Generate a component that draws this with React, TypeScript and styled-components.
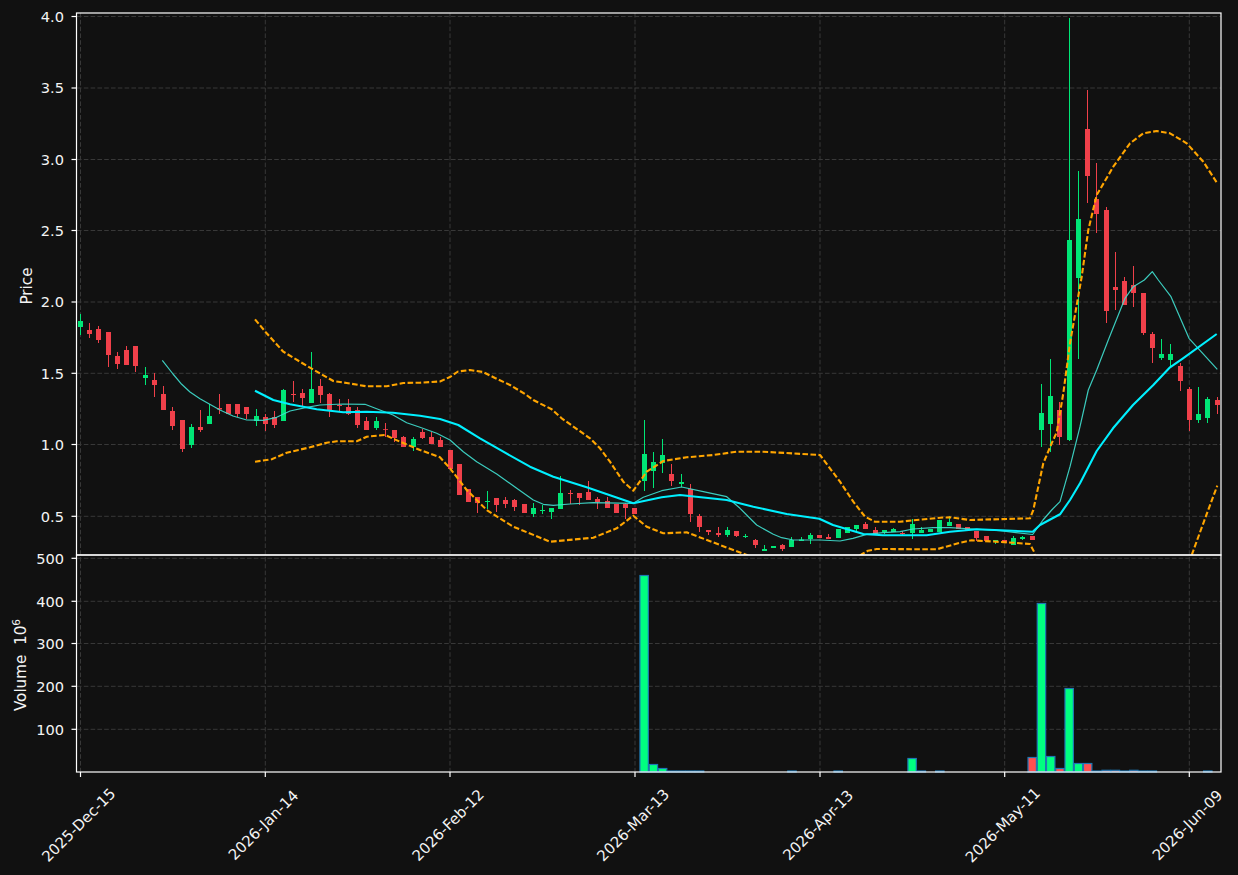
import React from "react";
import styled, { createGlobalStyle } from "styled-components";

const GlobalStyle = createGlobalStyle`
  html, body { margin: 0; padding: 0; background: #111111; overflow: hidden; }
`;

const Page = styled.main`
  width: 1238px;
  height: 875px;
  background: #111111;
`;

const ChartSvg = styled.svg`
  display: block;
  width: 1238px;
  height: 875px;
  font-family: "DejaVu Sans", sans-serif;
`;

const GridLine = styled.line`
  stroke: #383838;
  stroke-width: 1;
  stroke-dasharray: 4.6 2.2;
`;
const Spine = styled.rect`
  fill: none;
  stroke: #ffffff;
  stroke-width: 1.2;
`;
const Tick = styled.line`
  stroke: #ffffff;
  stroke-width: 1.2;
`;
const TickLabel = styled.text`
  fill: #f4f4f4;
  font-size: 14.6px;
`;
const DateLabel = styled.text`
  fill: #f4f4f4;
  font-size: 14.9px;
  text-anchor: middle;
`;
const AxisTitle = styled.text`
  fill: #f4f4f4;
  font-size: 15.2px;
  text-anchor: middle;
`;
const Sup = styled.tspan`
  font-size: 10.6px;
`;
const Wick = styled.line<{ $up: boolean }>`
  stroke: ${(p) => (p.$up ? "#00e676" : "#f0404a")};
  stroke-width: 1;
`;
const Body = styled.rect<{ $up: boolean }>`
  fill: ${(p) => (p.$up ? "#00e676" : "#f0404a")};
`;
const VolumeBar = styled.rect<{ $up: boolean }>`
  fill: ${(p) => (p.$up ? "#00ff80" : "#ff5050")};
  stroke: #1f77b4;
  stroke-width: 1.2;
`;
const ThinLine = styled.polyline`
  fill: none;
  stroke: #40e0d0;
  stroke-opacity: 0.9;
  stroke-width: 1.2;
  stroke-linejoin: round;
`;
const MeanLine = styled.polyline`
  fill: none;
  stroke: #00f0ff;
  stroke-width: 2.1;
  stroke-linejoin: round;
`;
const BandLine = styled.polyline`
  fill: none;
  stroke: #ffa500;
  stroke-width: 2.1;
  stroke-dasharray: 5.6 2.4;
  stroke-linejoin: round;
`;

const X0 = 80.5;
const DX = 9.24;
const xAt = (i: number) => X0 + DX * i;
const G = 1;
const R = 0;

// up?, wick top, body top, body bottom, wick bottom (pixel rows)
const candles: number[][] = [
  [G,314,321,327,335],[R,323,330,334,338],[R,326,329,340,343],[R,332,332,355,367],[R,352,356,364,369],
  [R,346,350,365,365],[R,346,346,366,372],[G,367,375,378,385],[R,373,380,385,397],[R,386,394,410,410],
  [R,407,411,426,430],[R,420,420,449,452],[G,424,427,445,448],[R,410,427,430,432],[G,404,416,424,424],
  [R,394,408,409.5,414],[R,404,404,414,414],[R,404,404,414,417],[R,407,407,414,419],[G,409,416,421,426],
  [R,414,417,424,431],[R,411,417,425,428],[G,389,390,421,421],[R,381,394,395,402],[R,389,393,398,406],
  [G,352,389,403,403],[R,379,386,395,403],[R,393,394,411,417],[R,399,405,406,412],[R,399,407,414,415],
  [R,407,410,425,428],[R,417,421,430,430],[G,417,421,428,430],[R,423,429,429.8,437],[R,430,430,438,442],
  [R,436,437,447,447],[G,437,439,447,451],[R,429,432,438,439],[R,432,437,444,444],[R,437,440,447,447],
  [R,450,450,469,469],[R,464,464,495,495],[R,489,489,502,502],[R,497,497,503,513],[G,491,501,502,509],
  [R,498,498,505,512],[R,497,500,504,508],[R,499,500,507,511],[R,504,504,513,513],[G,503,508,514,517],
  [G,505,510,511,514],[G,508,508,512,519],[G,476,493,509,509],[R,490,493,494,504],[R,493,493,498,505],
  [R,481,492,500,500],[R,497,499,502,509],[R,497,501,508,508],[R,504,504,513,513],[R,503,504,508,519],
  [R,508,508,514,514],[G,420,454,481,491],[G,452,462,471,488],[G,439,455,463,473],[R,464,474,481,486],
  [G,474,482,484,487],[R,484,489,514,522],[R,514,516,527,532],[R,530,530,532,535],[R,527,533,535,537],
  [G,527,530,535,537],[R,531,531,536,537],[G,534,536,537,538],[R,539,540,545,548],[G,545,549,551,551],
  [G,546,546,548,548],[R,544,545,549,551],[G,537,540,547,547],[G,537,539.5,541,541],[G,533,535,539,544],
  [R,535,535,538,538],[R,534,537,539,539],[G,529,529,538,538],[G,527,527,533,533],[G,525,525,529,531],
  [R,522,524,529,529],[R,527,530,534,534],[G,530,530,532,534],[G,528,529,532,532],[R,531,533,534,535],
  [G,519,524,533,539],[G,527,530,533,533],[G,529,529,532,532],[G,520,520,532,532],[G,516,522,526,526],
  [R,524,524,529,529],[R,527,527,530,530],[R,531,531,538,541],[R,536,536,541,541],[G,540,540,541.3,544],
  [R,540,540,543,543],[G,536,538,545,545],[G,536,537,539,540],[R,536,536,540,540],[G,384,413,430,447],
  [G,359,396,424,452],[R,402,410,437,445],[G,18,240,440,441],[G,171,219,278,359],[R,90,129,176,203],
  [R,163,199,214,233],[R,207,210,311,323],[R,252,287,290,310],[R,277,281,305,305],[R,266,285,293,307],
  [R,293,293,333,335],[R,332,334,348,363],[G,339,354,358,360],[G,344,354,360,367],[R,363,366,381,391],
  [R,387,389,420,431],[G,387,414,420,423],[G,397,399,418,423],[R,397,400,405,414],
];

// index, bar top row, up?
const volumes: number[][] = [
  [61,575.5,G],[62,764.5,G],[63,768.5,G],[64,771,G],[65,771,G],[66,771,G],[67,771,G],[77,771,G],[82,771,G],
  [90,758.5,G],[91,771,G],[93,771,G],[103,757.5,R],[104,603.5,G],[105,756.5,G],[106,768.5,R],
  [107,688.5,G],[108,763.5,G],[109,763.5,R],[110,771,G],[111,770.3,R],[112,770.3,R],[113,771,G],
  [114,770.3,R],[115,771,G],[116,771,G],[122,771,G],
];

const thin = "162.3,360.3 173,374 181.7,384.3 190,392 200,398.7 220,410 233,416 246.7,420 263,420.3 276.7,417.3 290,411 306.7,407.3 320,405 343,404 365,404.3 376.7,408.7 393,415 406.7,422.7 420,427.3 436.7,433.3 450,440 463.3,451.7 476.7,461.7 496.7,474 516.7,488.3 533.3,500 543.3,504.3 553.3,505.3 570,504 593.3,502.7 633.3,503.3 643.3,497.3 661.7,490.7 681.7,487 703.3,491.7 726.7,496.7 740,508.3 756.7,525 773.3,534.3 781.7,537.7 793.3,540 820,540 840,541 853,538.3 866.7,534.3 883,532.7 900,531.7 913,529 933,527.7 950,527.7 973,529 1000,530.7 1032.7,534.5 1043,520 1051.7,510 1060,501.7 1070,466.7 1080,426.7 1088.3,390 1096.7,370 1108.3,340 1125,298.3 1133.3,286.7 1144.3,280 1152.3,271.7 1158.3,280 1171,296.7 1189,338.3 1217.3,369.3";
const mean = "255,390.7 273.3,400 290,404.3 316.7,409.3 343.3,412.3 366.7,411.7 393,412.7 420,415.7 440,419 458.3,425 480,438.3 503.3,451.7 530,466.7 553.3,476.7 586.7,487.3 633.3,503.3 661.7,497.3 680,495 726.7,500 753.3,506.7 786.7,514 819.3,518.7 833,525 863.3,534 883,535.3 926.7,535.3 950,531.7 976.7,529.3 1032.7,531.7 1040,525 1060,514.3 1070,500 1080,483.3 1096.7,451 1113,428.3 1133,405 1153.3,385 1170,367.3 1183,358.3 1216.7,334";
const upper = "255,319.3 266.7,333.3 283.3,351.7 310,367.7 333.3,381 346.7,383 366.7,386.3 386.7,386.3 403.3,383 420,382.7 440,381.5 450,377 458,371.5 470,370 483,372 495,378 510,385 525,394 533.3,400 551.7,409.3 561.7,418.3 590,438.3 600,448.3 610,461.7 623.3,481.7 633.3,490.7 646.7,471.7 663.3,461 686.7,457.3 713.3,455 736.7,451.7 763.3,451.7 820,455 840,481.7 853.3,501.7 865,516.7 875,521.7 900,521.7 940,517.7 950,517.3 970,520 1030,518.3 1033.3,510 1043.3,463.3 1051.7,443.3 1056.7,432.3 1063.3,393.3 1070,343.3 1081.7,276.7 1088.3,230 1096.7,195 1113.3,166.7 1130,143.3 1143.3,133.3 1156.7,131 1170,133.3 1186.7,143.3 1203.3,161.7 1217.3,183.3";
const lower = "255,461.7 271.7,459.3 286.7,452.7 310,447.3 326.7,442.7 336.7,441.3 356.7,441.3 366.7,436.7 385,435 400,441.7 420,450 440,457.3 450,468.3 466.7,490 486.7,510 513.3,526.7 550,541.7 593.3,537.7 616.7,528.3 633.3,515.7 646.7,526.7 663.3,533.3 686.7,532.3 720,545 746.7,555 760,562 850,562 862.3,554 868,550.7 876.7,549 936.7,549.3 960,542.7 971.7,540.3 1013,542.7 1030,544 1034,551.7 1036,562 1185,572 1191.7,555 1203.3,523.3 1217.3,485.7";

const priceTicks: [string, number][] = [["4.0",16.5],["3.5",88],["3.0",159.5],["2.5",230.5],["2.0",302],["1.5",373.3],["1.0",444.5],["0.5",516.3]];
const volumeTicks: [string, number][] = [["500",558.3],["400",601.3],["300",643.5],["200",686.3],["100",729.3]];
const dateTicks: [string, number][] = [["2025-Dec-15",80.5],["2026-Jan-14",265.3],["2026-Feb-12",450],["2026-Mar-13",635],["2026-Apr-13",820],["2026-May-11",1004.7],["2026-Jun-09",1189.3]];

export default function App() {
  return (
    <Page>
      <GlobalStyle />
      <ChartSvg viewBox="0 0 1238 875">
        <defs>
          <clipPath id="price-panel"><rect x="76.5" y="13" width="1144.5" height="542" /></clipPath>
        </defs>
        {dateTicks.map(([d, x]) => (
          <GridLine key={d} x1={x} x2={x} y1={13} y2={772} />
        ))}
        {[...priceTicks, ...volumeTicks].map(([t, y]) => (
          <GridLine key={t} x1={77} x2={1221} y1={y} y2={y} />
        ))}
        {candles.map(([up, wt, bt, bb, wb], i) => {
          const x = Math.floor(xAt(i));
          return (
            <g key={i}>
              <Wick $up={!!up} x1={x + 0.5} x2={x + 0.5} y1={wt} y2={wb} />
              <Body $up={!!up} x={x - 2} y={bt} width={5} height={bb - bt} />
            </g>
          );
        })}
        <g clipPath="url(#price-panel)">
          <ThinLine points={thin} />
          <MeanLine points={mean} />
          <BandLine points={upper} />
          <BandLine points={lower} />
        </g>
        {volumes.map(([i, top, up]) => (
          <VolumeBar key={i} $up={!!up} x={xAt(i) - 4.2} y={top} width={8.4} height={772 - top} />
        ))}
        <Spine x={76.5} y={13} width={1144.5} height={542} />
        <Spine x={76.5} y={555} width={1144.5} height={217} />
        {priceTicks.map(([t, y]) => (
          <g key={t}>
            <Tick x1={71.5} x2={76.5} y1={y} y2={y} />
            <TickLabel x={64} y={y + 5.2} textAnchor="end">{t}</TickLabel>
          </g>
        ))}
        {volumeTicks.map(([t, y]) => (
          <g key={t}>
            <Tick x1={71.5} x2={76.5} y1={y} y2={y} />
            <TickLabel x={64} y={y + 5.2} textAnchor="end">{t}</TickLabel>
          </g>
        ))}
        {dateTicks.map(([d, x]) => (
          <g key={d}>
            <Tick x1={x} x2={x} y1={772} y2={777} />
            <DateLabel
              x={x - 2}
              y={825 + 5.3}
              transform={`rotate(-45 ${x - 2} 825)`}
            >
              {d}
            </DateLabel>
          </g>
        ))}
        <AxisTitle transform="translate(32 286) rotate(-90)">Price</AxisTitle>
        <AxisTitle transform="translate(25.5 665) rotate(-90)">
          Volume{"\u00a0\u00a0"}10<Sup dy={-5.5}>6</Sup>
        </AxisTitle>
      </ChartSvg>
    </Page>
  );
}
